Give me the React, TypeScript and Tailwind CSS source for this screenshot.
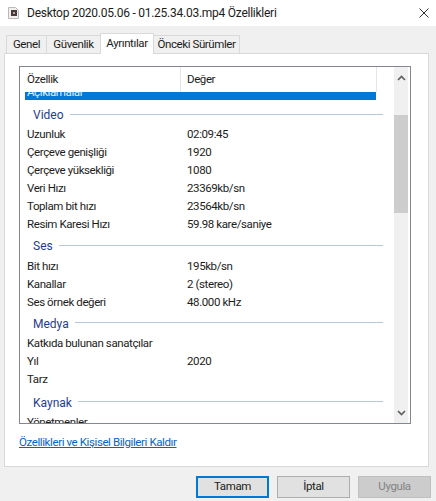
const TABS = [
  { label: 'Genel', width: 'w-[41px]' },
  { label: 'Güvenlik', width: 'w-[54px]' },
  { label: 'Ayrıntılar', width: 'w-[54px]', active: true },
  { label: 'Önceki Sürümler', width: 'w-[86px]' },
]

const GROUPS = [
  {
    title: 'Video',
    gap: 'mt-[3px] h-[22px]',
    rows: [
      ['Uzunluk', '02:09:45'],
      ['Çerçeve genişliği', '1920'],
      ['Çerçeve yüksekliği', '1080'],
      ['Veri Hızı', '23369kb/sn'],
      ['Toplam bit hızı', '23564kb/sn'],
      ['Resim Karesi Hızı', '59.98 kare/saniye'],
    ],
  },
  {
    title: 'Ses',
    gap: 'h-[24px]',
    rows: [
      ['Bit hızı', '195kb/sn'],
      ['Kanallar', '2 (stereo)'],
      ['Ses örnek değeri', '48.000 kHz'],
    ],
  },
  {
    title: 'Medya',
    gap: 'h-[23px]',
    rows: [
      ['Katkıda bulunan sanatçılar', ''],
      ['Yıl', '2020'],
      ['Tarz', ''],
    ],
  },
  {
    title: 'Kaynak',
    gap: 'h-[25px] pt-[2px]',
    rows: [['Yönetmenler', '']],
  },
]

function FileIcon() {
  return (
    <svg width="11" height="12" viewBox="0 0 11 12">
      <path d="M.5.5h7l3 3v8h-10z" fill="#f2efef" stroke="#bdb8b8" />
      <rect x="3" y="3" width="6" height="6" fill="#4a3a3e" />
      <rect x="5" y="5" width="2" height="2" fill="#b9a596" />
    </svg>
  )
}

function Arrow({ down }: { down?: boolean }) {
  return (
    <svg width="9" height="6" viewBox="0 0 9 6">
      <path d={down ? 'M1 1l3.5 3.5L8 1' : 'M1 5l3.5-3.5L8 5'} fill="none" stroke="#606060" strokeWidth="1.7" />
    </svg>
  )
}

export default function App() {
  return (
    <div className="w-[436px] h-[501px] overflow-hidden flex flex-col bg-[#f0f0f0] text-[#1c1c1c] text-[11.5px] tracking-[-0.4px] font-['Roboto','Noto_Sans',sans-serif]">
      <div className="h-[26px] shrink-0 bg-white flex items-center pl-[8px] pr-[7px]">
        <FileIcon />
        <span className="ml-[8px] pb-[1px] text-[12px] tracking-[-0.25px] whitespace-nowrap">Desktop 2020.05.06 - 01.25.34.03.mp4 Özellikleri</span>
        <svg className="ml-auto" width="10" height="10" viewBox="0 0 10 10">
          <path d="M.5.5l9 9M9.5.5l-9 9" stroke="#333" strokeWidth="1" />
        </svg>
      </div>

      <div className="flex h-[27px] shrink-0 items-end pl-[6px]">
        {TABS.map(t => (
          <div
            key={t.label}
            className={`${t.width} shrink-0 flex items-center justify-center whitespace-nowrap border-[#d9d9d9] border-t border-r ${
              t.active
                ? 'h-[21px] bg-white border-l -mb-px relative z-10 -ml-px pb-[1px]'
                : 'h-[18px] pt-[1px] bg-[#f0f0f0] first:border-l'
            }`}
          >
            {t.label}
          </div>
        ))}
      </div>

      <div className="ml-[4px] mr-[7px] h-[414px] shrink-0 bg-white border border-[#d9d9d9] pl-[14px] pr-[17px] pt-[12px]">
        <div className="h-[358px] border border-[#828790] flex overflow-hidden">
          <div className="w-[374px] shrink-0 overflow-hidden">
            <div className="h-[25px] flex">
              <div className="w-[161px] pl-[7px] pt-[1px] flex items-center border-r border-[#e5e5e5]">Özellik</div>
              <div className="w-[196px] pl-[6px] pt-[1px] flex items-center border-r border-[#e5e5e5]">Değer</div>
            </div>
            <div className="h-[332px] overflow-hidden pl-[5px] pr-[11px]">
              <div className="h-[8px] w-[351px] bg-[#0078d7] overflow-hidden">
                <div className="h-[18px] -mt-[8px] pl-[2px] flex items-center text-[#e3f0fb]">Açıklamalar</div>
              </div>
              {GROUPS.map(g => (
                <div key={g.title}>
                  <div className={`${g.gap} flex items-center pl-[8px]`}>
                    <span className="pt-[2px] text-[#1f3d8f] text-[12px] tracking-normal">{g.title}</span>
                    <div className="ml-[6px] h-px flex-1 bg-[#b4c7dc]" />
                  </div>
                  {g.rows.map(([k, v]) => (
                    <div key={k} className="h-[18px] pt-[1px] flex items-center whitespace-nowrap">
                      <div className="w-[160px] pl-[2px]">{k}</div>
                      <div className="pl-[2px]">{v}</div>
                    </div>
                  ))}
                </div>
              ))}
            </div>
          </div>
          <div className="w-[15px] ml-auto mr-[2px] bg-[#f0f0f0] flex flex-col items-center">
            <div className="h-[22px] shrink-0 flex items-center justify-center"><Arrow /></div>
            <div className="h-[26px] shrink-0" />
            <div className="h-[98px] w-full shrink-0 bg-[#cdcdcd]" />
            <div className="flex-1" />
            <div className="h-[20px] shrink-0 flex items-center justify-center"><Arrow down /></div>
          </div>
        </div>
        <div className="mt-[9px] leading-[18px] text-[#0066cc] underline whitespace-nowrap">Özellikleri ve Kişisel Bilgileri Kaldır</div>
      </div>

      <div className="flex justify-end gap-[8px] pr-[5px] pt-[9px]">
        <button className="w-[73px] h-[22px] bg-[#e1e1e1] border-2 border-[#0078d7]">Tamam</button>
        <button className="w-[73px] h-[22px] bg-[#e1e1e1] border border-[#adadad]">İptal</button>
        <button className="w-[73px] h-[22px] bg-[#cccccc] border border-[#bfbfbf] text-[#838383]">Uygula</button>
      </div>
    </div>
  )
}
